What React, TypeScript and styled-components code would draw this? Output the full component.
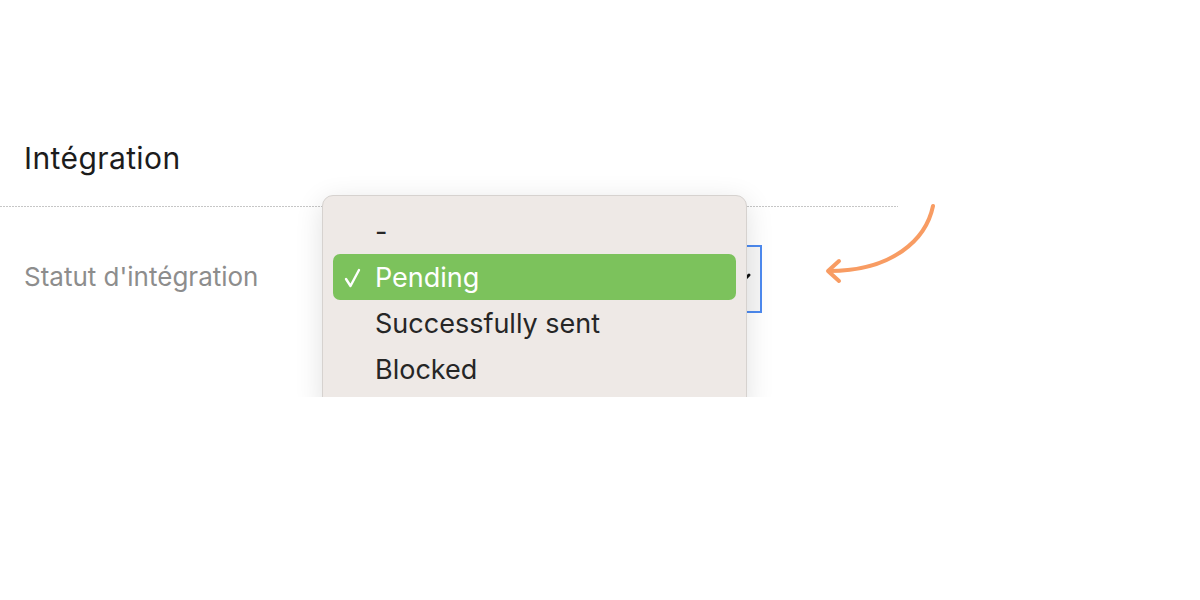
import { FC } from 'react'
import styled, { createGlobalStyle } from 'styled-components'

const GlobalStyle = createGlobalStyle`
  html, body {
    margin: 0;
    padding: 0;
    background: #ffffff;
  }
  body {
    font-family: Inter, "Noto Sans", "Liberation Sans", sans-serif;
    -webkit-font-smoothing: antialiased;
  }
`

const Page = styled.div`
  position: relative;
  width: 1200px;
  height: 600px;
  overflow: hidden;
  background: #ffffff;
`

const Section = styled.section`
  width: 898px;
  padding-top: 140px;
`

const Title = styled.h2`
  margin: 0;
  padding-left: 24px;
  font-size: 30px;
  font-weight: 400;
  line-height: 36px;
  color: #1c1c1c;
  letter-spacing: 0.4px;
`

const Divider = styled.div`
  margin-top: 30px;
  height: 1px;
  background-image: repeating-linear-gradient(
    to right,
    #c6c6c6 0,
    #c6c6c6 2px,
    transparent 2px,
    transparent 3px
  );
`

const FieldRow = styled.div`
  display: flex;
  align-items: center;
  margin-top: 38px;
  padding-left: 24px;
`

const FieldLabel = styled.label`
  flex: 0 0 306px;
  font-size: 26px;
  line-height: 32px;
  margin-top: -5px;
  color: #8d8d8d;
`

const SelectBox = styled.div`
  box-sizing: border-box;
  width: 432px;
  height: 68px;
  border: 2px solid #4d8af0;
  background: #f7f7f7;
  display: flex;
  align-items: center;
  justify-content: flex-end;
  padding-right: 8px;
`

const MenuClip = styled.div`
  position: absolute;
  left: 280px;
  top: 175px;
  width: 506px;
  height: 222px;
  overflow: hidden;
  padding: 20px 0 0 42px;
  box-sizing: border-box;
`

const Menu = styled.ul`
  width: 425px;
  box-sizing: border-box;
  margin: 0;
  padding: 12px 10px 20px;
  list-style: none;
  background: #eee9e6;
  border: 1px solid #d6d2cf;
  border-radius: 11px;
  box-shadow: 0 6px 28px rgba(0, 0, 0, 0.12);
`

const MenuItem = styled.li<{ $selected?: boolean }>`
  height: 46px;
  display: flex;
  align-items: center;
  border-radius: 7px;
  font-size: 27px;
  color: ${(p) => (p.$selected ? '#ffffff' : '#262626')};
  background: ${(p) => (p.$selected ? '#7cc25c' : 'transparent')};
`

const Check = styled.span`
  flex: 0 0 42px;
  display: flex;
  align-items: center;
  box-sizing: border-box;
  padding-left: 11px;
  padding-top: 2px;
`

const Arrow = styled.svg`
  position: absolute;
  left: 820px;
  top: 195px;
`

const options = ['-', 'Pending', 'Successfully sent', 'Blocked']

const App: FC = () => {
  const selected = 'Pending'
  return (
    <Page>
      <GlobalStyle />
      <Section>
        <Title>Intégration</Title>
        <Divider />
        <FieldRow>
          <FieldLabel>Statut d'intégration</FieldLabel>
          <SelectBox>
            <svg width="22" height="14" viewBox="0 0 22 14" fill="none">
              <path
                d="M3 3 L11 11 L19 3"
                stroke="#111"
                strokeWidth="3"
                strokeLinecap="round"
                strokeLinejoin="round"
              />
            </svg>
          </SelectBox>
        </FieldRow>
      </Section>
      <MenuClip>
        <Menu>
          {options.map((opt) => (
            <MenuItem key={opt} $selected={opt === selected}>
              <Check>
                {opt === selected && (
                  <svg width="17" height="20" viewBox="0 0 17 20" fill="none">
                    <path
                      d="M2 11 L6.5 18 L15 2"
                      stroke="#ffffff"
                      strokeWidth="2.4"
                      strokeLinecap="round"
                      strokeLinejoin="round"
                    />
                  </svg>
                )}
              </Check>
              {opt}
            </MenuItem>
          ))}
        </Menu>
      </MenuClip>
      <Arrow width="125" height="95" viewBox="0 0 125 95" fill="none">
        <path
          d="M113 11 C 106 45, 72 76, 9 76"
          stroke="#f89c63"
          strokeWidth="4"
          strokeLinecap="round"
        />
        <path
          d="M19 66 L8 76 L19 86"
          stroke="#f89c63"
          strokeWidth="4"
          strokeLinecap="round"
          strokeLinejoin="round"
        />
      </Arrow>
    </Page>
  )
}

export default App
